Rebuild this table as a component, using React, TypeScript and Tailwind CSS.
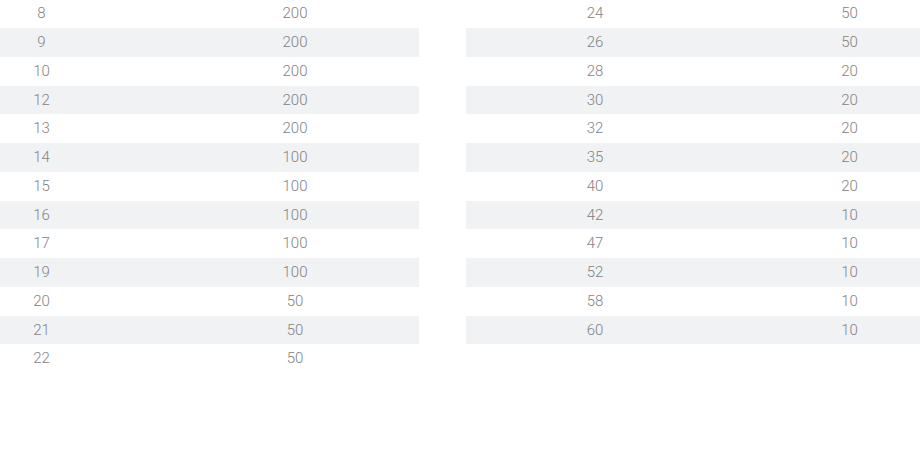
const left: [string, string][] = [
  ['8', '200'],
  ['9', '200'],
  ['10', '200'],
  ['12', '200'],
  ['13', '200'],
  ['14', '100'],
  ['15', '100'],
  ['16', '100'],
  ['17', '100'],
  ['19', '100'],
  ['20', '50'],
  ['21', '50'],
  ['22', '50'],
];

const right: [string, string][] = [
  ['24', '50'],
  ['26', '50'],
  ['28', '20'],
  ['30', '20'],
  ['32', '20'],
  ['35', '20'],
  ['40', '20'],
  ['42', '10'],
  ['47', '10'],
  ['52', '10'],
  ['58', '10'],
  ['60', '10'],
];

const App = () => {
  return (
    <div
      className="w-[920px] h-[461px] overflow-hidden bg-white text-[#838383] text-[15px] font-light"
      style={{ fontFamily: 'Roboto, "Noto Sans", sans-serif' }}
    >
      <div className="flex gap-[47px] -mt-[0.75px]">
        <div className="w-[419px] shrink-0">
          {left.map(([size, qty], i) => (
            <div
              key={size}
              className={`flex items-center h-[28.75px] ${i % 2 === 1 ? 'bg-[#f1f2f4]' : ''}`}
            >
              <div className="w-[83px] text-center">{size}</div>
              <div className="flex-1 pl-[88px] text-center">{qty}</div>
            </div>
          ))}
        </div>
        <div className="w-[520px] shrink-0">
          {right.map(([size, qty], i) => (
            <div
              key={size}
              className={`flex items-center h-[28.75px] ${i % 2 === 1 ? 'bg-[#f1f2f4]' : ''}`}
            >
              <div className="w-[258px] text-center">{size}</div>
              <div className="w-[251px] text-center">{qty}</div>
            </div>
          ))}
        </div>
      </div>
    </div>
  );
};

export default App;
